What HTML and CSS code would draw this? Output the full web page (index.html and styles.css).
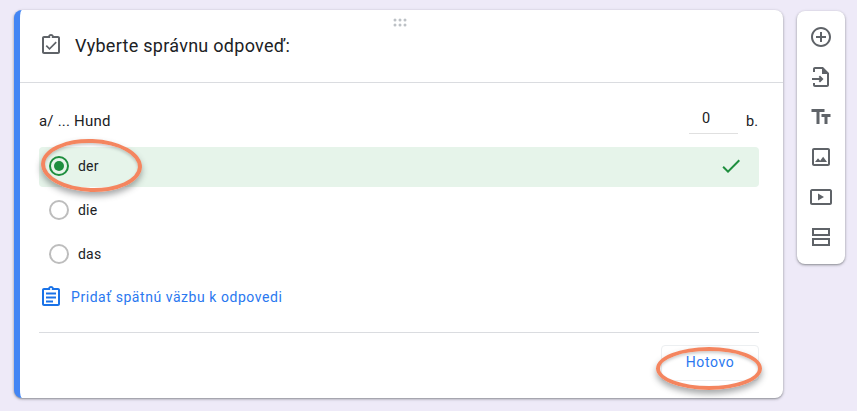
FILE: index.html
```html
<!DOCTYPE html>
<html lang="sk">
<head>
<meta charset="utf-8">
<title>Vyberte správnu odpoveď</title>
<link rel="stylesheet" href="styles.css">
</head>
<body>
<main class="page">
  <section class="card">
    <svg class="handle" width="16" height="10" viewBox="0 0 16 10"><g fill="#bdc1c6"><circle cx="2" cy="2" r="1.5"/><circle cx="7" cy="2" r="1.5"/><circle cx="12" cy="2" r="1.5"/><circle cx="2" cy="7" r="1.5"/><circle cx="7" cy="7" r="1.5"/><circle cx="12" cy="7" r="1.5"/></g></svg>
    <header class="card-head">
      <svg class="icon" viewBox="0 0 24 24" fill="#5f6368"><path d="M19 3h-4.18C14.4 1.84 13.3 1 12 1c-1.3 0-2.4.84-2.82 2H5c-1.1 0-2 .9-2 2v14c0 1.1.9 2 2 2h14c1.1 0 2-.9 2-2V5c0-1.1-.9-2-2-2zm-7 0c.55 0 1 .45 1 1s-.45 1-1 1-1-.45-1-1 .45-1 1-1zm7 16H5V5h14v14z"/><path d="M16.6 8.6 10.5 14.7l-2.6-2.6-1.2 1.2 3.8 3.8 7.3-7.3z"/></svg>
      <h1 class="title">Vyberte správnu odpoveď:</h1>
    </header>
    <div class="card-body">
      <div class="question">
        <span class="question-text">a/ ... Hund</span>
        <span class="points-value">0</span>
        <span class="points-unit">b.</span>
      </div>
      <div class="option option-correct">
        <span class="radio radio-on"></span>
        <span class="option-label">der</span>
        <svg class="icon check" viewBox="0 0 24 24" fill="#1e8e3e"><path d="M9 16.17 4.83 12l-1.42 1.41L9 19 21 7l-1.41-1.41z"/></svg>
      </div>
      <div class="option">
        <span class="radio"></span>
        <span class="option-label">die</span>
      </div>
      <div class="option">
        <span class="radio"></span>
        <span class="option-label">das</span>
      </div>
      <a class="feedback">
        <svg class="icon" viewBox="0 0 24 24" fill="#1a73e8"><path d="M19 3h-4.18C14.4 1.84 13.3 1 12 1c-1.3 0-2.4.84-2.82 2H5c-1.1 0-2 .9-2 2v14c0 1.1.9 2 2 2h14c1.1 0 2-.9 2-2V5c0-1.1-.9-2-2-2zm-7 0c.55 0 1 .45 1 1s-.45 1-1 1-1-.45-1-1 .45-1 1-1zm7 16H5V5h14v14z"/><path d="M7 7.500h10v2H7zM7 11.500h10v2H7zM7 15.500h7v2H7z"/></svg>
        <span>Pridať spätnú väzbu k odpovedi</span>
      </a>
      <footer class="card-foot">
        <button class="done" type="button">Hotovo</button>
      </footer>
    </div>
  </section>
  <aside class="tools">
    <svg class="icon" viewBox="0 0 24 24" fill="#5f6368"><path d="M13 7h-2v4H7v2h4v4h2v-4h4v-2h-4V7zm-1-5C6.480 2 2 6.480 2 12s4.480 10 10 10 10-4.480 10-10S17.520 2 12 2zm0 18c-4.410 0-8-3.590-8-8s3.590-8 8-8 8 3.590 8 8-3.590 8-8 8z"/></svg>
    <svg class="icon" viewBox="0 0 24 24" fill="#5f6368"><path d="M14 2H6c-1.100 0-2 .9-2 2v3h2V4h7v5h5v11H6v-2H4v2c0 1.100.9 2 2 2h12c1.100 0 2-.9 2-2V8z"/><path d="M11 10.500 9.600 11.900l1.100 1.100H3v2h7.700l-1.100 1.100L11 17.500l3.500-3.500z"/></svg>
    <svg class="icon" viewBox="0 0 24 24" fill="#5f6368"><path d="M2.500 4v3h5v12h3V7h5V4h-13zm19 5h-9v3h3v7h3v-7h3V9z"/></svg>
    <svg class="icon" viewBox="0 0 24 24" fill="#5f6368"><path d="M19 5v14H5V5h14m0-2H5c-1.100 0-2 .9-2 2v14c0 1.100.9 2 2 2h14c1.100 0 2-.9 2-2V5c0-1.100-.9-2-2-2z"/><path d="M14.140 11.860l-3 3.870L9 13.140 6 17h12z"/></svg>
    <svg class="icon" viewBox="0 0 24 24" fill="#5f6368"><path d="M3 4h18c1 0 2 1 2 2v12c0 1-1 2-2 2H3c-1 0-2-1-2-2V6c0-1 1-2 2-2zm0 2v12h18V6z" fill-rule="evenodd"/><path d="M9 8.500v7l6-3.500z"/></svg>
    <svg class="icon" viewBox="0 0 24 24" fill="#5f6368"><path d="M3 3h18v8H3zm2 2v4h14V5zM3 13h18v8H3zm2 2v4h14v-4z" fill-rule="evenodd"/></svg>
  </aside>
  <div class="ring ring-answer"></div>
  <div class="ring ring-done"></div>
</main>
</body>
</html>
```

FILE: styles.css
```css
* { box-sizing: border-box; }
html, body { margin: 0; height: 100%; overflow: hidden; }
body { background: #eeeaf8; font-family: Roboto, "Liberation Sans", sans-serif; color: #202124; }
.page { position: relative; display: flex; align-items: flex-start; gap: 14px; padding: 10px 0 0 14px; height: 411px; }
.icon { width: 24px; height: 24px; flex: none; display: block; }

.card { position: relative; width: 769px; height: 388px; background: #fff; border-left: 6px solid #4285f4; border-radius: 8px; box-shadow: 0 1px 2px rgba(60,64,67,.45), 0 1px 3px 1px rgba(60,64,67,.12); }
.handle { position: absolute; left: 373px; top: 8px; }
.card-head { height: 73px; display: flex; align-items: center; gap: 12px; padding: 0 0 2px 19px; border-bottom: 1px solid #dadce0; }
.title { margin: 0; font-size: 18px; font-weight: 400; letter-spacing: .28px; }

.card-body { padding: 0 24px 0 19px; }
.question { display: flex; align-items: center; height: 26px; margin-top: 25px; margin-bottom: 13px; font-size: 15px; color: #202124; }
.question-text { flex: 1; letter-spacing: .2px; }
.points-value { width: 49px; height: 26px; padding: 2px 15px 0 0; margin-right: 8px; text-align: center; font-size: 14.500px; border-bottom: 1px solid #e0e0e0; }
.points-unit { width: 13px; font-size: 14.500px; }

.option { display: flex; align-items: center; height: 40px; margin-bottom: 4px; padding-left: 10px; border-radius: 4px; }
.option-correct { background: #e6f4ea; }
.radio { width: 20px; height: 20px; margin-top: -2px; border: 2px solid #bdbdbd; border-radius: 50%; display: flex; align-items: center; justify-content: center; }
.radio-on { border-color: #1e8e3e; }
.radio-on::after { content: ""; width: 10px; height: 10px; border-radius: 50%; background: #1e8e3e; }
.option-label { margin-left: 9px; margin-top: -3px; font-size: 14px; letter-spacing: .2px; flex: 1; }
.check { margin-right: 16px; margin-top: -2px; }

.feedback { display: flex; align-items: center; gap: 8px; height: 24px; margin-top: 10px; color: #2a78f0; font-size: 14px; letter-spacing: .55px; font-weight: 400; }
.feedback .icon { margin-top: 0; }
.card-foot { margin-top: 23px; padding-top: 12px; border-top: 1px solid #dadce0; display: flex; justify-content: flex-end; }
.done { width: 98px; height: 36px; padding: 0 0 2px; background: #fff; border: 1px solid #eceff1; border-radius: 4px; color: #2a78f0; font: 400 14px Roboto, sans-serif; letter-spacing: .6px; }

.tools { width: 48px; height: 253px; margin-top: 1px; padding: 14px 12px; display: flex; flex-direction: column; gap: 16px; background: #fff; border-radius: 8px; box-shadow: 0 1px 2px rgba(60,64,67,.45), 0 1px 3px 1px rgba(60,64,67,.12); }

.ring { position: absolute; border: 4px solid #f4855f; border-radius: 50%; box-shadow: 0 4px 6px rgba(60,64,67,.45), inset 0 2px 3px rgba(60,64,67,.25); }
.ring-answer { left: 41px; top: 139px; width: 101px; height: 53px; transform: rotate(2deg); }
.ring-done { left: 656px; top: 347px; width: 106px; height: 43px; }
```
